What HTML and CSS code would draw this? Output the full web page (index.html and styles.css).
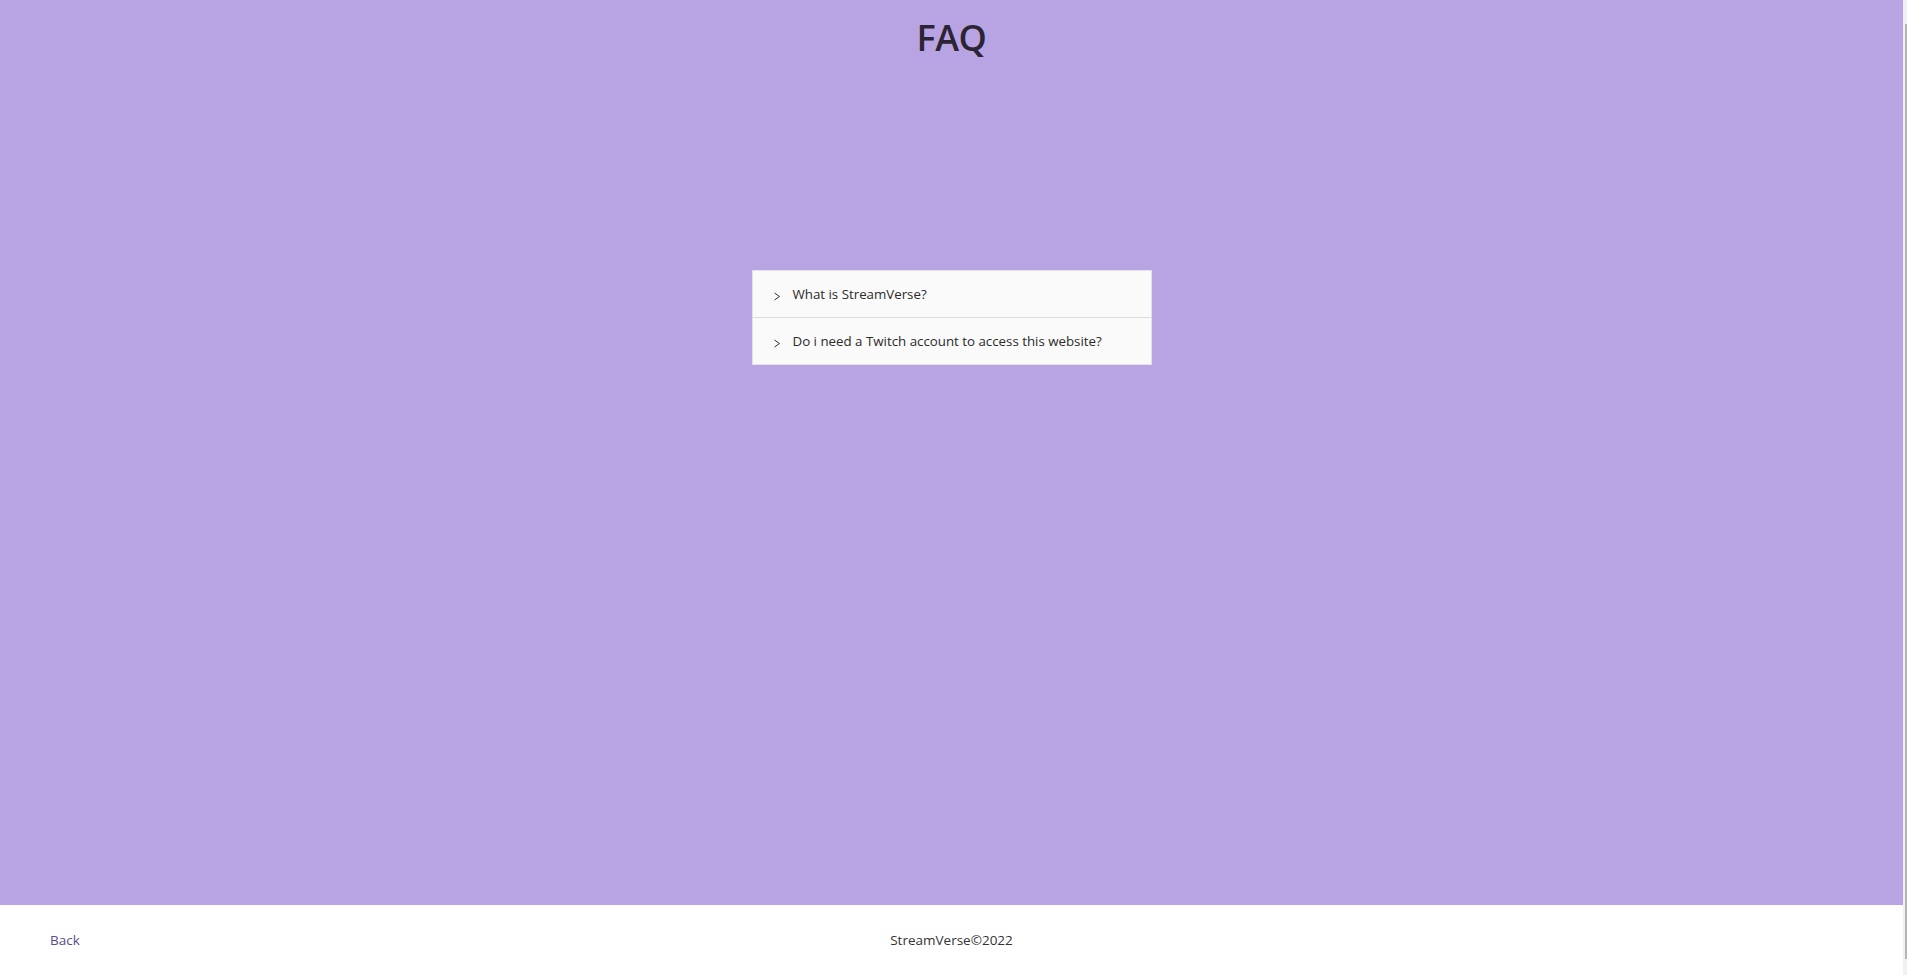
FILE: index.html
```html
<!DOCTYPE html>
<html>
<head>
<meta charset="utf-8">
<title>FAQ</title>
<link rel="stylesheet" href="styles.css">
</head>
<body>
<div class="page">
  <main class="main">
    <h1 class="title">FAQ</h1>
    <div class="accordion">
      <div class="item">
        <span class="chev"><svg width="8" height="9" viewBox="0 0 8 9"><path d="M1.5 1 L6.5 4.5 L1.5 8" fill="none" stroke="#333" stroke-width="1"/></svg></span>
        <span class="q">What is StreamVerse?</span>
      </div>
      <div class="item">
        <span class="chev"><svg width="8" height="9" viewBox="0 0 8 9"><path d="M1.5 1 L6.5 4.5 L1.5 8" fill="none" stroke="#333" stroke-width="1"/></svg></span>
        <span class="q">Do i need a Twitch account to access this website?</span>
      </div>
    </div>
  </main>
  <footer class="footer">
    <a class="back" href="#">Back</a>
    <span class="copy">StreamVerse©2022</span>
    <span class="spacer"></span>
  </footer>
</div>
<div class="scrollbar"><div class="thumb"></div></div>
</body>
</html>
```
FILE: styles.css
```css
html, body {
  margin: 0;
  padding: 0;
  height: 100%;
  overflow: hidden;
}
body {
  font-family: "Open Sans", "Noto Sans", sans-serif;
  background: #ffffff;
  color: #222;
}
.page {
  display: flex;
  flex-direction: column;
  height: 975px;
  width: 1903px;
}
.main {
  background: #b9a4e3;
  height: 905px;
  display: flex;
  flex-direction: column;
  align-items: center;
}
.title {
  margin: 14px 0 0 0;
  font-size: 36px;
  font-weight: 600;
  color: #2b2433;
  line-height: 48px;
  letter-spacing: -0.5px;
}
.accordion {
  margin-top: 208px;
  width: 400px;
  background: #fafafa;
  border: 1px solid #e2e2e2;
  box-sizing: border-box;
}
.item {
  height: 46px;
  display: flex;
  align-items: center;
  padding-left: 20px;
  box-sizing: border-box;
}
.item + .item {
  border-top: 1px solid #dcdcdc;
  height: 47px;
}
.chev {
  width: 20px;
  display: flex;
  padding-top: 4px;
}
.q {
  font-size: 13.3px;
  color: #2a2a2a;
}
.footer {
  height: 70px;
  display: flex;
  align-items: center;
  padding: 0 50px;
  font-size: 13.5px;
}
.back {
  color: #5b4c8c;
  text-decoration: none;
  width: 100px;
}
.copy {
  flex: 1;
  text-align: center;
  color: #333;
}
.spacer {
  width: 100px;
}
.scrollbar {
  position: fixed;
  top: 0;
  right: 0;
  width: 4px;
  height: 975px;
  background: #f1eff4;
}
.thumb {
  position: absolute;
  top: 24px;
  right: 0;
  width: 2px;
  height: 935px;
  background: #b5b5b5;
}
```
